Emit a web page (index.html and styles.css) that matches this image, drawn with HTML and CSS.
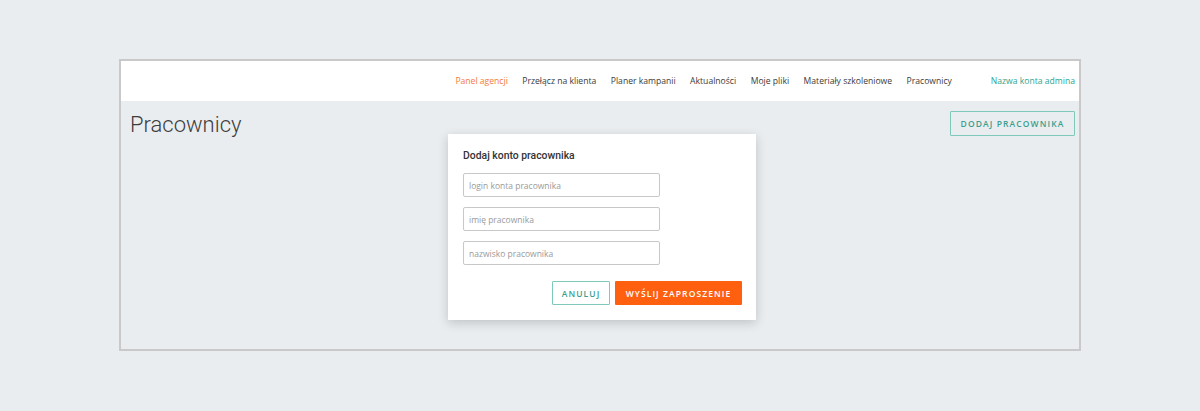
FILE: index.html
```html
<!DOCTYPE html>
<html lang="pl">
<head>
<meta charset="utf-8">
<title>Pracownicy</title>
<link rel="stylesheet" href="styles.css">
</head>
<body>
<div class="frame">
  <header class="topbar">
    <nav class="nav">
      <a class="nav-item active">Panel agencji</a>
      <a class="nav-item">Przełącz na klienta</a>
      <a class="nav-item">Planer kampanii</a>
      <a class="nav-item">Aktualności</a>
      <a class="nav-item">Moje pliki</a>
      <a class="nav-item">Materiały szkoleniowe</a>
      <a class="nav-item">Pracownicy</a>
    </nav>
    <a class="account">Nazwa konta admina</a>
  </header>
  <main class="content">
    <div class="title-row">
      <h1 class="page-title">Pracownicy</h1>
      <button class="btn btn-outline btn-add">DODAJ PRACOWNIKA</button>
    </div>
    <div class="modal">
      <h2 class="modal-title">Dodaj konto pracownika</h2>
      <div class="fields">
        <input class="field" type="text" placeholder="login konta pracownika">
        <input class="field" type="text" placeholder="imię pracownika">
        <input class="field" type="text" placeholder="nazwisko pracownika">
      </div>
      <div class="actions">
        <button class="btn btn-outline">ANULUJ</button>
        <button class="btn btn-primary">WYŚLIJ ZAPROSZENIE</button>
      </div>
    </div>
  </main>
</div>
</body>
</html>
```
FILE: styles.css
```css
* { box-sizing: border-box; }

body {
  margin: 0;
  background: #eaedf0;
  font-family: "Open Sans", "Liberation Sans", sans-serif;
}

.frame {
  margin: 59px 0 0 119px;
  width: 962px;
  height: 292px;
  border: 2px solid #c9c9c9;
  background: #eaedf0;
  display: flex;
  flex-direction: column;
}

.topbar {
  height: 40px;
  background: #ffffff;
  display: flex;
  align-items: center;
  justify-content: flex-end;
  padding-right: 4px;
}

.nav {
  display: flex;
  gap: 14.5px;
  margin-right: 39px;
}

.nav-item, .account {
  font-size: 8.6px;
  color: #3a3a3a;
  text-decoration: none;
  white-space: nowrap;
}

.nav-item.active { color: #f47a3a; }

.account { color: #2ea58f; }

.content {
  position: relative;
  flex: 1;
}

.title-row {
  display: flex;
  justify-content: space-between;
  align-items: flex-start;
  padding: 10px 4px 0 9px;
}

.page-title {
  margin: 0;
  font-family: Roboto, "Liberation Sans", sans-serif;
  font-weight: 300;
  font-size: 22px;
  line-height: 28px;
  color: #3d3d3d;
}

.btn {
  font-family: "Open Sans", "Liberation Sans", sans-serif;
  font-weight: 600;
  font-size: 8.5px;
  letter-spacing: 1.1px;
  height: 24px;
  padding: 0;
  cursor: pointer;
  border-radius: 1px;
}

.btn-outline {
  background: #ffffff;
  color: #3a9f8e;
  border: 1.5px solid #7ec9bb;
}

.btn-add {
  height: 25px;
  width: 125px;
  background: transparent;
}

.btn-primary {
  background: #ff6010;
  color: #ffffff;
  border: none;
  width: 127px;
}

.actions .btn-outline { width: 58px; }

.modal {
  position: absolute;
  left: 327px;
  top: 33px;
  width: 308px;
  height: 186px;
  background: #ffffff;
  box-shadow: 0 3px 10px rgba(0, 0, 0, 0.18);
  padding: 15px 14px 15px 15px;
  display: flex;
  flex-direction: column;
}

.modal-title {
  margin: 0 0 10px;
  font-family: Roboto, "Liberation Sans", sans-serif;
  font-weight: 500;
  font-size: 10.4px;
  line-height: 14px;
  color: #333333;
}

.fields {
  display: flex;
  flex-direction: column;
  gap: 10px;
}

.field {
  width: 197px;
  height: 24px;
  border: 1px solid #c8c8c8;
  border-radius: 2px;
  padding: 0 5px;
  font-family: "Open Sans", "Liberation Sans", sans-serif;
  font-size: 8.5px;
  color: #333;
}

.field::placeholder { color: #9a9a9a; }

.actions {
  display: flex;
  justify-content: flex-end;
  gap: 5px;
  margin-top: auto;
}
```
